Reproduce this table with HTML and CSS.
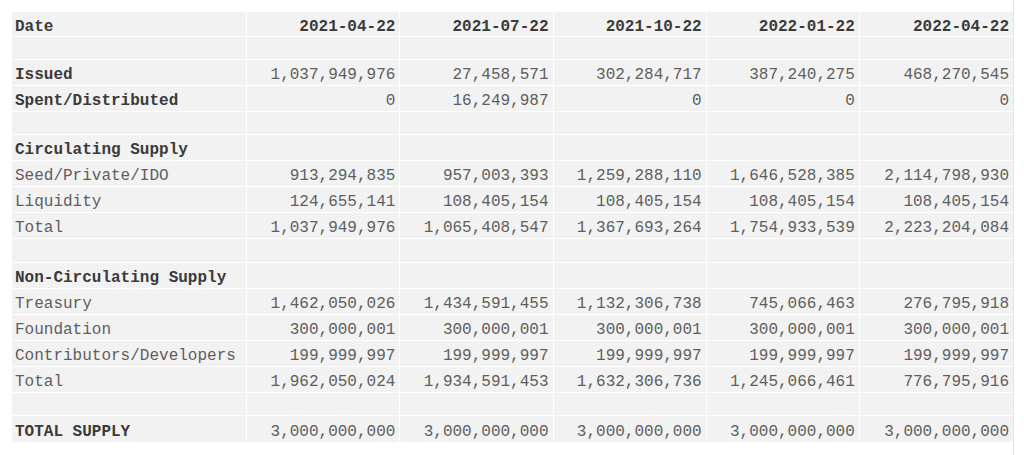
FILE: index.html
```html
<!DOCTYPE html>
<html>
<head>
<meta charset="utf-8">
<link rel="stylesheet" href="styles.css">
</head>
<body>
<div class="page">
<table class="supply">
  <colgroup>
    <col class="c-label"><col class="c-num"><col class="c-num"><col class="c-num"><col class="c-num"><col class="c-num">
  </colgroup>
  <tr class="head"><th class="label">Date</th><th>2021-04-22</th><th>2021-07-22</th><th>2021-10-22</th><th>2022-01-22</th><th>2022-04-22</th></tr>
  <tr class="blank"><td></td><td></td><td></td><td></td><td></td><td></td></tr>
  <tr><td class="label b">Issued</td><td>1,037,949,976</td><td>27,458,571</td><td>302,284,717</td><td>387,240,275</td><td>468,270,545</td></tr>
  <tr><td class="label b">Spent/Distributed</td><td>0</td><td>16,249,987</td><td>0</td><td>0</td><td>0</td></tr>
  <tr class="blank"><td></td><td></td><td></td><td></td><td></td><td></td></tr>
  <tr><td class="label b">Circulating Supply</td><td></td><td></td><td></td><td></td><td></td></tr>
  <tr><td class="label">Seed/Private/IDO</td><td>913,294,835</td><td>957,003,393</td><td>1,259,288,110</td><td>1,646,528,385</td><td>2,114,798,930</td></tr>
  <tr><td class="label">Liquidity</td><td>124,655,141</td><td>108,405,154</td><td>108,405,154</td><td>108,405,154</td><td>108,405,154</td></tr>
  <tr><td class="label">Total</td><td>1,037,949,976</td><td>1,065,408,547</td><td>1,367,693,264</td><td>1,754,933,539</td><td>2,223,204,084</td></tr>
  <tr class="blank tall"><td></td><td></td><td></td><td></td><td></td><td></td></tr>
  <tr><td class="label b">Non-Circulating Supply</td><td></td><td></td><td></td><td></td><td></td></tr>
  <tr><td class="label">Treasury</td><td>1,462,050,026</td><td>1,434,591,455</td><td>1,132,306,738</td><td>745,066,463</td><td>276,795,918</td></tr>
  <tr><td class="label">Foundation</td><td>300,000,001</td><td>300,000,001</td><td>300,000,001</td><td>300,000,001</td><td>300,000,001</td></tr>
  <tr><td class="label">Contributors/Developers</td><td>199,999,997</td><td>199,999,997</td><td>199,999,997</td><td>199,999,997</td><td>199,999,997</td></tr>
  <tr><td class="label">Total</td><td>1,962,050,024</td><td>1,934,591,453</td><td>1,632,306,736</td><td>1,245,066,461</td><td>776,795,916</td></tr>
  <tr class="blank"><td></td><td></td><td></td><td></td><td></td><td></td></tr>
  <tr><td class="label b">TOTAL SUPPLY</td><td>3,000,000,000</td><td>3,000,000,000</td><td>3,000,000,000</td><td>3,000,000,000</td><td>3,000,000,000</td></tr>
</table>
</div>
</body>
</html>
```
FILE: styles.css
```css
html, body {
  margin: 0;
  padding: 0;
  background: #ffffff;
}
.page {
  box-sizing: border-box;
  width: 1014px;
  height: 455px;
  padding: 12px 0 0 12px;
  border-right: 1px solid #e4e4e4;
  overflow: hidden;
}
.supply {
  border-collapse: separate;
  border-spacing: 0;
  table-layout: fixed;
  width: 1001px;
  font-family: "Liberation Mono", "Courier New", monospace;
  font-size: 16px;
  color: #5e5e5e;
}
.c-label { width: 235px; }
.c-num { width: 153px; }
.supply th,
.supply td {
  background: #f2f2f2;
  border-right: 1px solid #ffffff;
  border-bottom: 1px solid #ffffff;
  padding: 5px 4px 0 3px;
  line-height: 18px;
  text-align: right;
  vertical-align: middle;
  white-space: nowrap;
  font-weight: normal;
}
.supply th:last-child,
.supply td:last-child {
  border-right: 0;
}
.supply tr { height: 26px; }
.supply tr.head { height: 25px; }
.supply tr.blank { height: 23px; }
.supply tr.blank td { padding: 0; }
.supply tr.blank.tall { height: 24px; }
.supply tr:last-child td { border-bottom: 0; height: 21px; }
.supply th {
  font-weight: bold;
  color: #3a3a3a;
}
.supply .label {
  text-align: left;
}
.supply .b {
  font-weight: bold;
  color: #3a3a3a;
}
```
